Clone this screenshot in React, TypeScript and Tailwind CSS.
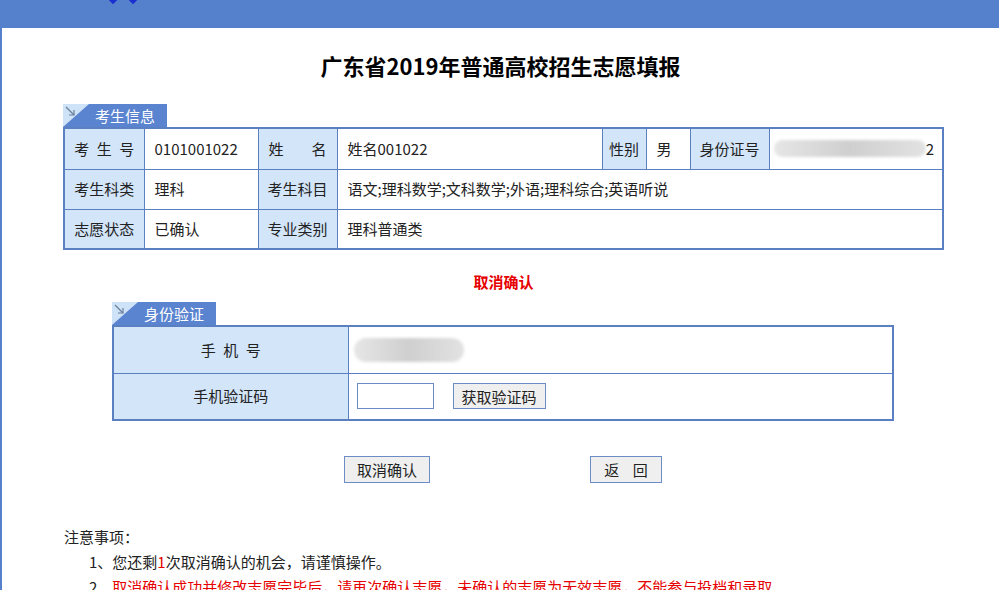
import React from 'react';

const font = { fontFamily: '"Microsoft YaHei", "Noto Sans CJK SC", "Noto Sans", sans-serif' };

function Tab({ title }: { title: string }) {
  return (
    <div className="relative flex h-[23px] w-[104px] items-center bg-[#5a83d0]">
      <svg className="absolute left-0 top-0" width="26" height="23" viewBox="0 0 26 23">
        <polygon points="0,0 26,0 0,23" fill="#cfe3f8" />
        <line x1="3" y1="3" x2="11" y2="11" stroke="#6b7f9c" strokeWidth="1.2" />
        <polyline points="6,11 11,11 11,6" fill="none" stroke="#6b7f9c" strokeWidth="1.2" />
      </svg>
      <span className="ml-[32px] text-[15px] leading-none text-white">{title}</span>
    </div>
  );
}

function Blur({ w, h }: { w: number; h: number }) {
  return (
    <div
      className="rounded-full bg-gradient-to-r from-[#e6e6e6] via-[#cfcfcf] to-[#e2e2e2] blur-[1.5px]"
      style={{ width: w, height: h }}
    />
  );
}

const label = 'bg-[#d2e5f9] border border-[#5b80c2] text-center font-normal';
const cell = 'border border-[#5b80c2] px-[10px] text-left';

export default function App() {
  return (
    <div className="h-[590px] w-[999px] overflow-hidden bg-white text-[#222]" style={font}>
      <div className="relative h-[28px] bg-[#5580cc]">
        <div className="absolute left-[110px] top-[-3px] h-[6px] w-[6px] rotate-45 bg-[#1a2fd0]" />
        <div className="absolute left-[130px] top-[-3px] h-[6px] w-[6px] rotate-45 bg-[#1a2fd0]" />
      </div>
      <div className="h-[562px] border-l-2 border-[#5580cc] pt-[24px]">
        <h1 className="h-[26px] text-center text-[22px] font-bold leading-[26px] text-black">
          广东省2019年普通高校招生志愿填报
        </h1>

        <div className="ml-[61px] mt-[26px]">
          <Tab title="考生信息" />
          <table className="w-[881px] table-fixed border-collapse border-2 border-[#5b80c2] text-[15px]">
            <colgroup>
              <col className="w-[80px]" />
              <col className="w-[114px]" />
              <col className="w-[79px]" />
              <col className="w-[265px]" />
              <col className="w-[44px]" />
              <col className="w-[44px]" />
              <col className="w-[79px]" />
              <col />
            </colgroup>
            <tbody>
              <tr className="h-[41px]">
                <td className={label}>考&ensp;生&ensp;号</td>
                <td className={cell}>0101001022</td>
                <td className={label + ' px-[10px]'}>
                  <div className="flex justify-between">
                    <span>姓</span>
                    <span>名</span>
                  </div>
                </td>
                <td className={cell}>姓名001022</td>
                <td className={label}>性别</td>
                <td className={cell}>男</td>
                <td className={label}>身份证号</td>
                <td className={cell + ' pl-[4px] pr-[8px]'}>
                  <div className="flex items-center justify-between">
                    <Blur w={152} h={17} />
                    <span>2</span>
                  </div>
                </td>
              </tr>
              <tr className="h-[40px]">
                <td className={label}>考生科类</td>
                <td className={cell}>理科</td>
                <td className={label}>考生科目</td>
                <td className={cell} colSpan={5}>
                  语文;理科数学;文科数学;外语;理科综合;英语听说
                </td>
              </tr>
              <tr className="h-[40px]">
                <td className={label}>志愿状态</td>
                <td className={cell}>已确认</td>
                <td className={label}>专业类别</td>
                <td className={cell} colSpan={5}>
                  理科普通类
                </td>
              </tr>
            </tbody>
          </table>
        </div>

        <p className="mt-[22px] pl-[6px] text-center text-[15px] font-bold leading-[20px] text-[#e60000]">取消确认</p>

        <div className="ml-[110px] mt-[10px]">
          <Tab title="身份验证" />
          <table className="w-[782px] table-fixed border-collapse border-2 border-[#5b80c2] text-[15px]">
            <colgroup>
              <col className="w-[235px]" />
              <col />
            </colgroup>
            <tbody>
              <tr className="h-[47px]">
                <td className={label}>手&ensp;机&ensp;号</td>
                <td className={cell + ' pl-[5px]'}>
                  <Blur w={110} h={24} />
                </td>
              </tr>
              <tr className="h-[47px]">
                <td className={label}>手机验证码</td>
                <td className={cell + ' pl-[8px]'}>
                  <div className="flex items-center gap-[19px]">
                    <input className="h-[26px] w-[77px] border border-[#6d8bc5] bg-white outline-none" />
                    <button className="h-[26px] border border-[#6d8bc5] bg-[#efefef] px-[8px] text-[15px] leading-none text-[#222]">
                      获取验证码
                    </button>
                  </div>
                </td>
              </tr>
            </tbody>
          </table>
        </div>

        <div className="ml-[5px] mt-[35px] flex justify-center gap-[160px]">
          <button className="h-[27px] w-[86px] border border-[#6d8bc5] bg-[#efefef] text-[15px] leading-none text-[#222]">
            取消确认
          </button>
          <button className="h-[27px] w-[72px] border border-[#6d8bc5] bg-[#efefef] text-[15px] leading-none text-[#222]">
            返&nbsp;&nbsp;&nbsp;&nbsp;回
          </button>
        </div>

        <div className="ml-[62px] mt-[41px] text-[15px] leading-[25px] text-[#222]">
          <p>注意事项：</p>
          <div className="pl-[25px]">
            <p>
              1、您还剩<span className="text-[#e60000]">1</span>次取消确认的机会，请谨慎操作。
            </p>
            <p>
              2、
              <span className="text-[#e60000]">
                取消确认成功并修改志愿完毕后，请再次确认志愿，未确认的志愿为无效志愿，不能参与投档和录取。
              </span>
            </p>
          </div>
        </div>
      </div>
    </div>
  );
}
